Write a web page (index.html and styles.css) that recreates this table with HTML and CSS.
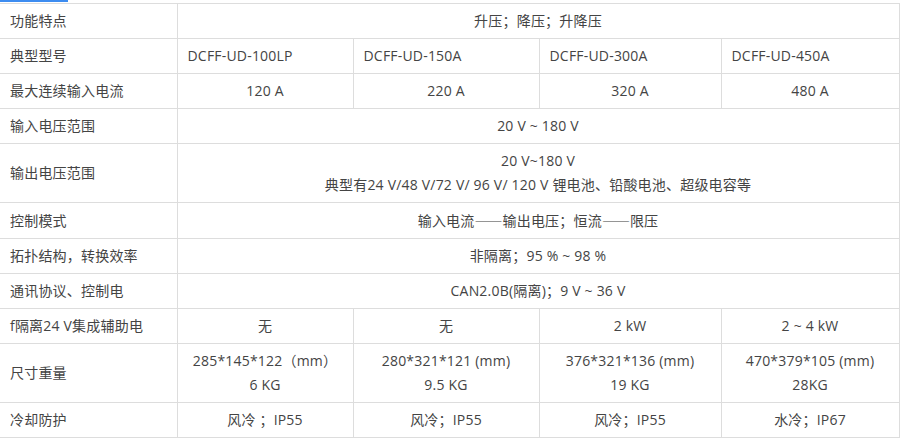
FILE: index.html
```html
<!DOCTYPE html>
<html lang="zh-CN">
<head>
<meta charset="utf-8">
<link rel="stylesheet" href="styles.css">
</head>
<body>
<div class="tab-bar"></div>
<table class="spec">
  <colgroup>
    <col class="c0"><col class="c1"><col class="c2"><col class="c3"><col class="c4">
  </colgroup>
  <tbody>
    <tr><td class="lbl">功能特点</td><td colspan="4">升压；降压；升降压</td></tr>
    <tr class="models"><td class="lbl">典型型号</td><td>DCFF-UD-100LP</td><td>DCFF-UD-150A</td><td>DCFF-UD-300A</td><td>DCFF-UD-450A</td></tr>
    <tr><td class="lbl">最大连续输入电流</td><td>120 A</td><td>220 A</td><td>320 A</td><td>480 A</td></tr>
    <tr><td class="lbl">输入电压范围</td><td colspan="4">20 V ~ 180 V</td></tr>
    <tr><td class="lbl">输出电压范围</td><td colspan="4">20 V~180 V<br>典型有24 V/48 V/72 V/ 96 V/ 120 V 锂电池、铅酸电池、超级电容等</td></tr>
    <tr><td class="lbl">控制模式</td><td colspan="4">输入电流<span class="cjk">——</span>输出电压；恒流<span class="cjk">——</span>限压</td></tr>
    <tr><td class="lbl">拓扑结构，转换效率</td><td colspan="4">非隔离；95 % ~ 98 %</td></tr>
    <tr><td class="lbl">通讯协议、控制电</td><td colspan="4">CAN2.0B(隔离)；9 V ~ 36 V</td></tr>
    <tr><td class="lbl">f隔离24 V集成辅助电</td><td>无</td><td>无</td><td>2 kW</td><td>2 ~ 4 kW</td></tr>
    <tr><td class="lbl">尺寸重量</td><td>285*145*122（mm）<br>6 KG</td><td>280*321*121 (mm)<br>9.5 KG</td><td>376*321*136 (mm)<br>19 KG</td><td>470*379*105 (mm)<br>28KG</td></tr>
    <tr><td class="lbl">冷却防护</td><td>风冷 ；IP55</td><td>风冷；IP55</td><td>风冷；IP55</td><td>水冷；IP67</td></tr>
  </tbody>
</table>
</body>
</html>
```
FILE: styles.css
```css
html, body {
  margin: 0;
  padding: 0;
  background: #ffffff;
}
body {
  font-family: "Open Sans", "Noto Sans CJK SC", sans-serif;
  font-size: 14px;
  color: #444444;
}
.tab-bar {
  width: 68px;
  height: 2px;
  background: #3d8cf0;
  margin-bottom: 1px;
}
.spec {
  border-collapse: collapse;
  table-layout: fixed;
  width: 899px;
}
.c0 { width: 177px; }
.c1 { width: 176px; }
.c2 { width: 186px; }
.c3 { width: 182px; }
.c4 { width: 178px; }
.spec td {
  border: 1px solid #dddddd;
  padding: 5px 10px;
  line-height: 24px;
  text-align: center;
  vertical-align: middle;
  white-space: nowrap;
  overflow: hidden;
  letter-spacing: 0.2px;
}
.spec td:first-child {
  border-left: none;
}
.spec td.lbl {
  text-align: left;
}
.models td {
  text-align: left;
}
.cjk {
  font-family: "Noto Sans CJK SC", sans-serif;
  letter-spacing: 0;
}
```
